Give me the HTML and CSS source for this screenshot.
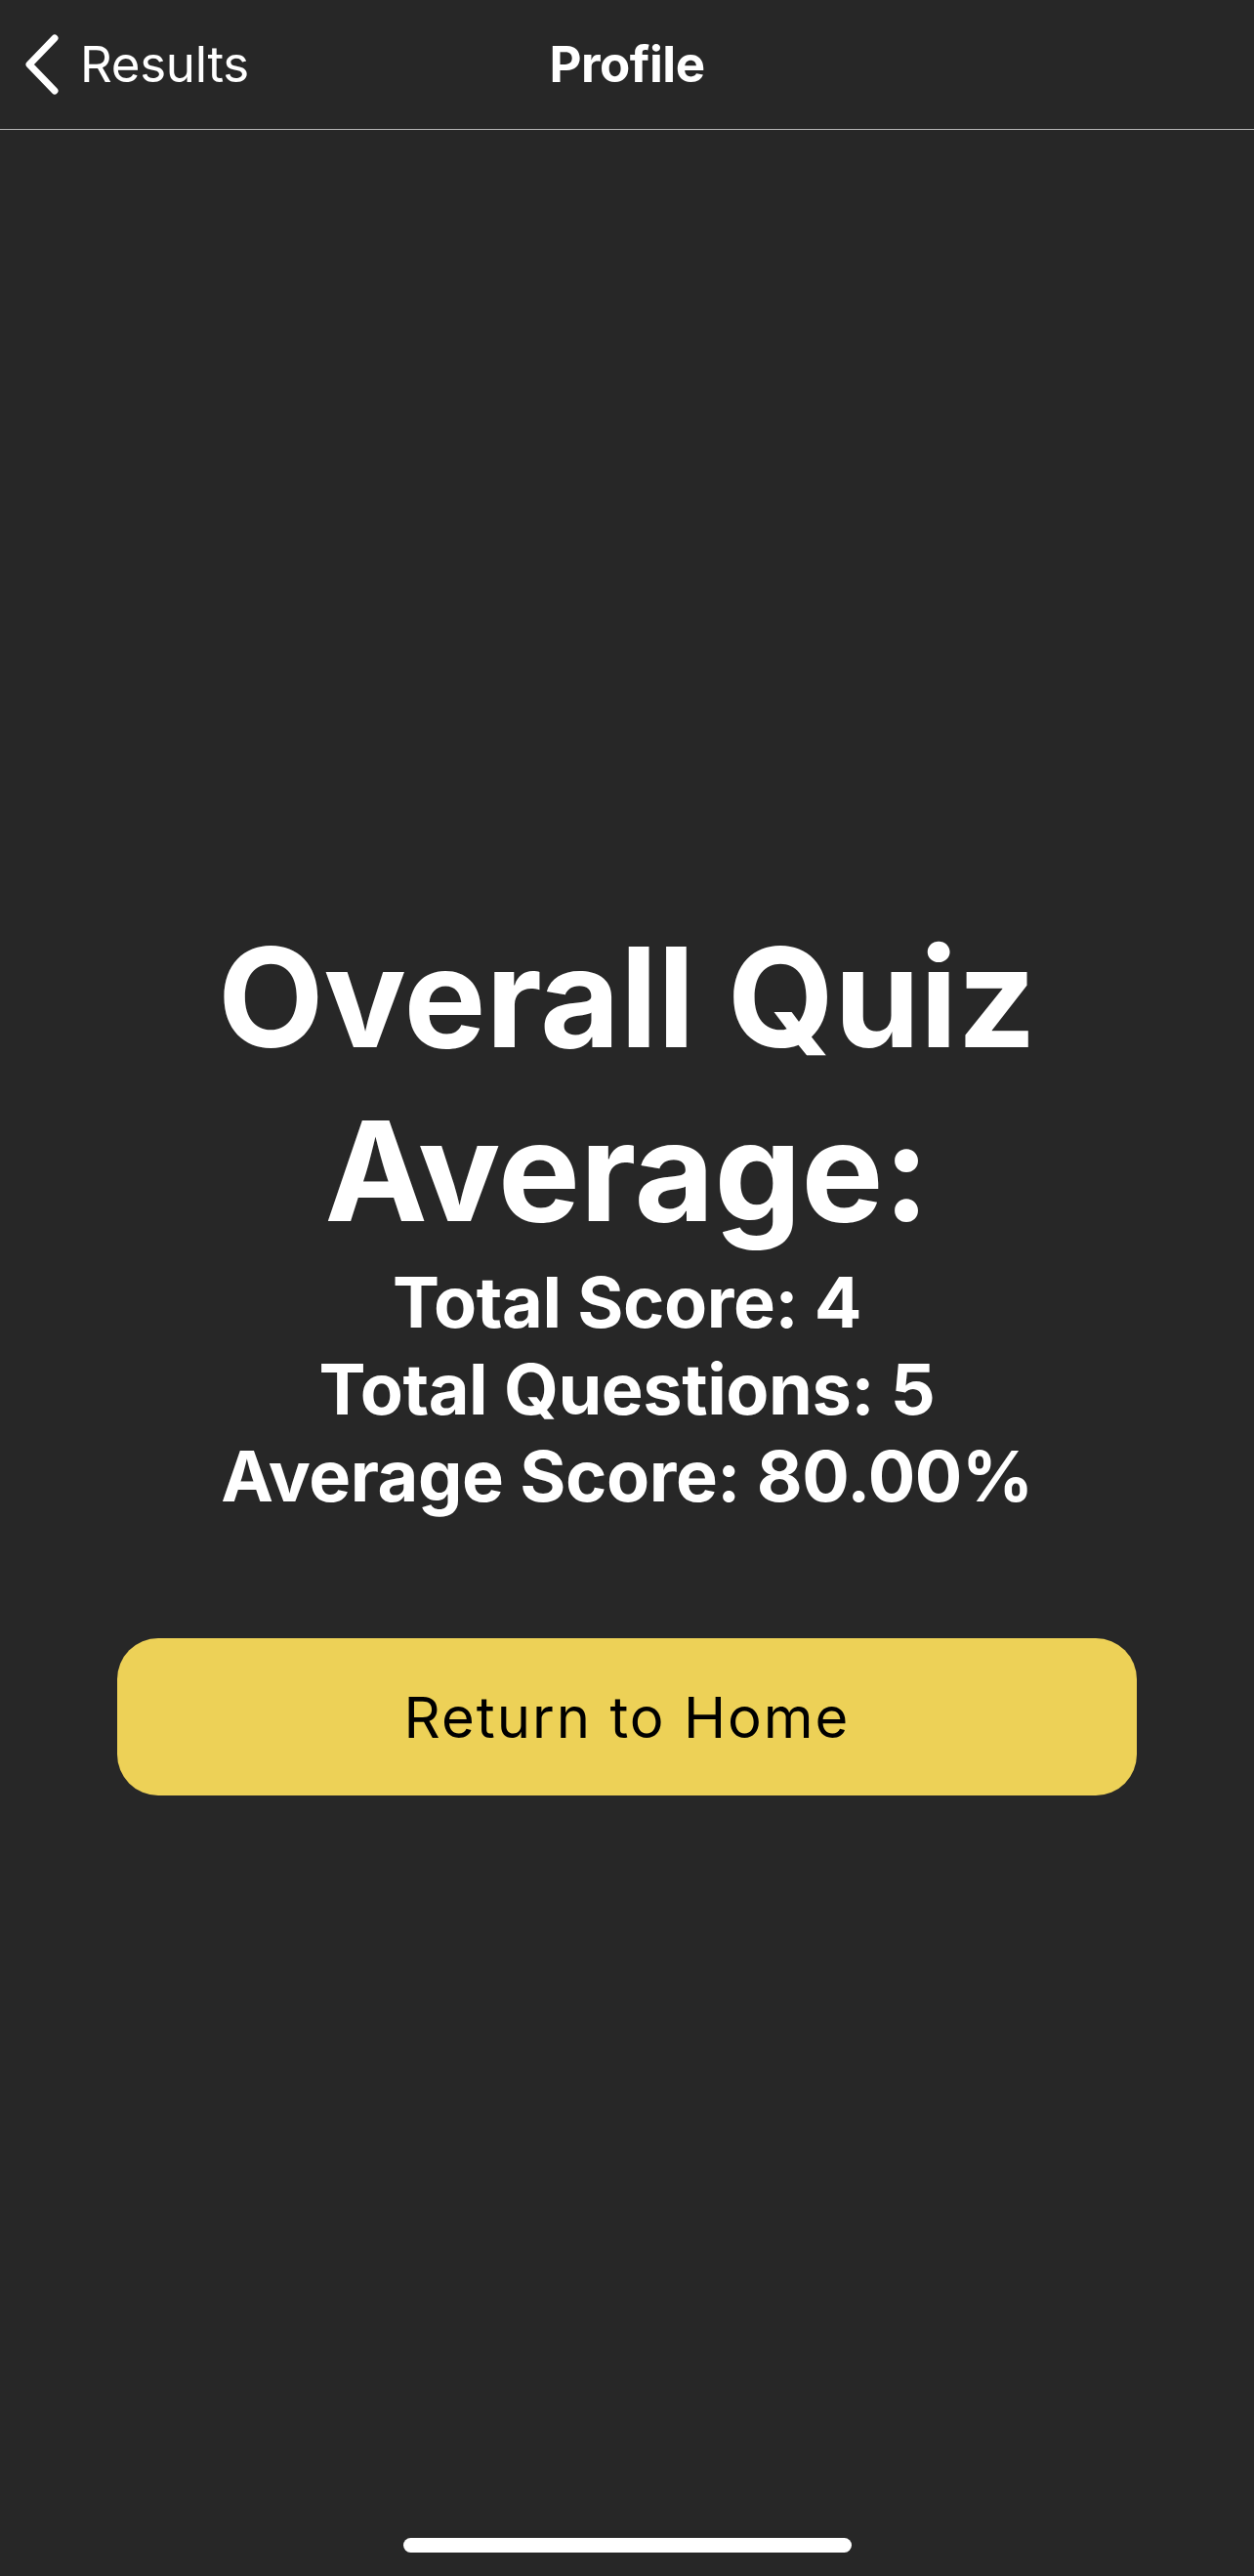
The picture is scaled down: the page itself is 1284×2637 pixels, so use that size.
FILE: index.html
```html
<!DOCTYPE html>
<html lang="en">
<head>
<meta charset="utf-8">
<title>Profile</title>
<link rel="stylesheet" href="styles.css">
</head>
<body>
<div class="screen">
  <header class="navbar">
    <div class="back">
      <svg class="chevron" width="36" height="62" viewBox="0 0 36 62" aria-hidden="true">
        <path d="M31 4 L5 31 L31 58" fill="none" stroke="#ffffff" stroke-width="7" stroke-linecap="round" stroke-linejoin="round"/>
      </svg>
      <span class="back-label">Results</span>
    </div>
    <div class="nav-title">Profile</div>
  </header>
  <main class="content">
    <h1 class="title">Overall Quiz<br>Average:</h1>
    <div class="stats">
      <p class="stat">Total Score: 4</p>
      <p class="stat">Total Questions: 5</p>
      <p class="stat">Average Score: 80.00%</p>
    </div>
    <button class="home-btn">Return to Home</button>
  </main>
  <footer class="home-area">
    <div class="home-indicator"></div>
  </footer>
</div>
</body>
</html>
```
FILE: styles.css
```css
html, body {
  margin: 0;
  padding: 0;
  background: #272727;
}
body {
  font-family: Inter, "Noto Sans", "Liberation Sans", sans-serif;
  color: #ffffff;
}
.screen {
  width: 1284px;
  height: 2637px;
  display: flex;
  flex-direction: column;
  background: #272727;
}
.navbar {
  height: 132px;
  flex: none;
  border-bottom: 1px solid #b4b4b4;
  display: grid;
  grid-template-columns: 1fr auto 1fr;
  align-items: center;
  box-sizing: content-box;
}
.back {
  display: flex;
  align-items: center;
  padding-left: 25px;
  gap: 21px;
}
.chevron {
  display: block;
  width: 36px;
  height: 62px;
}
.back-label {
  font-size: 51px;
  font-weight: 400;
  letter-spacing: -0.3px;
  line-height: 62px;
}
.nav-title {
  grid-column: 2;
  font-size: 51px;
  font-weight: 700;
  line-height: 62px;
  letter-spacing: -0.5px;
}
.content {
  flex: 1;
  display: flex;
  flex-direction: column;
  align-items: center;
  padding-top: 799px;
}
.title {
  margin: 0;
  font-size: 141px;
  line-height: 178px;
  font-weight: 700;
  text-align: center;
  letter-spacing: 0;
}
.stats {
  margin-top: 0;
  display: flex;
  flex-direction: column;
  align-items: center;
}
.stat {
  margin: 0;
  font-size: 72px;
  line-height: 89px;
  font-weight: 700;
  letter-spacing: -0.4px;
}
.home-btn {
  margin-top: 122px;
  width: 1044px;
  height: 161px;
  border: none;
  border-radius: 42px;
  background: #edd157;
  color: #000000;
  font-family: Inter, "Noto Sans", "Liberation Sans", sans-serif;
  font-size: 58px;
  font-weight: 400;
  letter-spacing: 2px;
  padding: 0;
}
.home-area {
  flex: none;
  display: flex;
  justify-content: center;
  padding-bottom: 24px;
}
.home-indicator {
  width: 459px;
  height: 15px;
  border-radius: 8px;
  background: #ffffff;
}
```
